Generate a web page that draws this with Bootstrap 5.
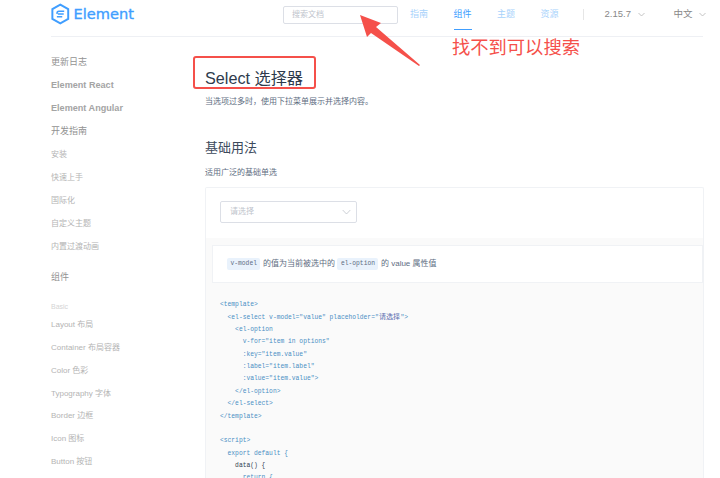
<!DOCTYPE html>
<html lang="zh">
<head>
<meta charset="utf-8">
<title>Select 选择器</title>
<link href="https://cdn.jsdelivr.net/npm/bootstrap@5.3.0/dist/css/bootstrap.min.css" rel="stylesheet">
<style>
html,body{height:478px;overflow:hidden;background:#fff}
body{position:relative;font-family:"Liberation Sans","Noto Sans CJK SC",sans-serif;color:#5e6d82;font-size:8px}
.page-wrap{padding-left:51px;padding-right:17px;width:720px;height:478px;overflow:hidden}
.top-bar{height:37px;border-bottom:1px solid #eef0f4;position:relative}
.logo-word{font-family:"DejaVu Sans","Noto Sans CJK SC",sans-serif;font-size:14.6px;font-weight:400;-webkit-text-stroke:.35px #409eff;color:#409eff;margin-left:4px;line-height:1}
.logo-box{width:83px;margin-top:3px;flex:none}
.search-box{flex:none;width:115px;height:18px;margin-left:149px;margin-top:6px;border:1px solid #dcdfe6;border-radius:2px;padding-left:8px;font-size:8px;line-height:16px;color:#c0c4cc}
.nav-links{flex:none;margin-left:12px;gap:25.5px;font-size:9px;color:#a8d2fb;padding-top:8px}
.nav-links span{width:18px;white-space:nowrap;position:relative}
.nav-links .on{color:#409eff}
.nav-links .on::after{content:"";position:absolute;left:0;right:0;top:21px;height:1px;background:#409eff}
.nav-sep{flex:none;width:1px;height:11px;background:#e6e6e6;margin:9px 0 0 24px}
.ver{flex:none;font-size:9.5px;color:#888;padding-top:7px;white-space:nowrap}
.ver-a{margin-left:21px}
.ver-b{margin-left:29px}
.side{width:154px;flex:none;padding-top:18px}
.side div{height:23px;line-height:15px;font-size:8px;color:#b4b4b4;white-space:nowrap}
.side .t1{font-size:9px;color:#929292}
.side .t2{font-size:9.1px;font-weight:700;color:#a4a4a4}
.side .t3{font-size:7px;color:#d4d4d4;height:16px;line-height:11px;margin-top:8px}
.side .t5{height:22.85px}
.side .gap{height:8px}
.doc{width:499px;flex:none}
.h-main{font-size:16.2px;font-weight:400;color:#2e3b4c;margin:31px 0 0;line-height:20px}
.lead-txt{font-size:8px;margin:8px 0 0;line-height:12px;color:#5e6d82}
.h-sub{font-size:13px;font-weight:400;color:#3c4a5c;margin:30px 0 0;line-height:20px}
.sub-txt{font-size:8px;margin:9px 0 0;line-height:12px;color:#5e6d82}
.demo-box{margin-top:8px;border:1px solid #f0f2f5;border-bottom:0;border-radius:2px 2px 0 0;height:292px;overflow:hidden}
.demo-top{height:50px;padding:13px 14px}
.sel-box{width:137px;height:22px;border:1px solid #dcdfe6;border-radius:2px;padding:0 5px 0 9px;color:#c0c4cc;font-size:8px}
.demo-code{background:#fafafa;padding:7px 0 0 6px;height:241px;overflow:hidden}
.tip-box{background:#fff;border:1px solid #f0f2f5;height:38px;padding:0 14px;font-size:8px;color:#5e6d82;white-space:nowrap}
.tip-code{font-family:"Liberation Mono",monospace;font-size:6.3px;line-height:8px;background:#e9f2fc;color:#5e6d82;padding:2px 3.5px;border-radius:2px;margin:0 2.5px 0 0}
.tip-sp{margin-right:2.5px}
.code-txt{margin:16px 0 0 8px;font-family:"Liberation Mono","Noto Sans CJK SC",monospace;font-size:6.3px;line-height:12.4px;color:#4a8fc4}
.code-ln{height:12.4px;white-space:pre}
.code-dark{color:#2f3e52}
.code-cjk{font-size:7px;color:#5a6fb0;margin:0 .4px}
.mark-rect{position:absolute;left:193px;top:56px;width:123px;height:33px;border:2px solid #f5504a;border-radius:3px}
.mark-text{position:absolute;left:452px;top:36px;font-size:18.3px;line-height:24px;color:#f5504a;white-space:nowrap}
.mark-arrow{position:absolute;left:355px;top:12px}
</style>
</head>
<body>
<div class="page-wrap">
  <div class="top-bar d-flex">
    <div class="logo-box d-flex align-items-start">
      <svg width="19" height="22" viewBox="0 0 19 22" fill="none"><path d="M9.5 1.4 17.6 6v10L9.5 20.6 1.4 16V6Z" stroke="#409eff" stroke-width="2"/><path d="M13.5 8.2 8 8.2C6.6 8.2 6 9.4 6.2 10.8M13 11 7 11M6 13.8H11.5" stroke="#409eff" stroke-width="1.6"/></svg>
      <span class="logo-word mt-1">Element</span>
    </div>
    <div class="search-box">搜索文档</div>
    <div class="nav-links d-flex">
      <span>指南</span><span class="on">组件</span><span>主题</span><span>资源</span>
    </div>
    <div class="nav-sep"></div>
    <div class="ver ver-a">2.15.7
      <svg class="ms-1" width="7" height="5" viewBox="0 0 7 5" fill="none"><path d="M.5 1 3.5 4 6.5 1" stroke="#b5b5b5" stroke-width=".8"/></svg>
    </div>
    <div class="ver ver-b">中文
      <svg class="ms-1" width="7" height="5" viewBox="0 0 7 5" fill="none"><path d="M.5 1 3.5 4 6.5 1" stroke="#b5b5b5" stroke-width=".8"/></svg>
    </div>
  </div>
  <div class="d-flex">
    <div class="side">
      <div class="t1">更新日志</div>
      <div class="t2">Element React</div>
      <div class="t2">Element Angular</div>
      <div class="t1">开发指南</div>
      <div>安装</div>
      <div>快速上手</div>
      <div>国际化</div>
      <div>自定义主题</div>
      <div>内置过渡动画</div>
      <div class="gap"></div>
      <div class="t1">组件</div>
      <div class="t3">Basic</div>
      <div class="t5">Layout 布局</div>
      <div class="t5">Container 布局容器</div>
      <div class="t5">Color 色彩</div>
      <div class="t5">Typography 字体</div>
      <div class="t5">Border 边框</div>
      <div class="t5">Icon 图标</div>
      <div class="t5">Button 按钮</div>
    </div>
    <div class="doc">
      <h1 class="h-main">Select 选择器</h1>
      <p class="lead-txt">当选项过多时，使用下拉菜单展示并选择内容。</p>
      <h2 class="h-sub">基础用法</h2>
      <p class="sub-txt">适用广泛的基础单选</p>
      <div class="demo-box">
        <div class="demo-top">
          <div class="sel-box d-flex align-items-center justify-content-between">
            <span>请选择</span>
            <svg width="9" height="6" viewBox="0 0 9 6" fill="none"><path d="M.7 1 4.5 5 8.3 1" stroke="#c0c4cc" stroke-width=".8"/></svg>
          </div>
        </div>
        <div class="demo-code">
          <div class="tip-box d-flex align-items-center">
            <code class="tip-code">v-model</code><span class="tip-sp">的值为当前被选中的</span><code class="tip-code">el-option</code><span>的 value 属性值</span>
          </div>
          <div class="code-txt">
            <div class="code-ln">&lt;template&gt;</div>
            <div class="code-ln">  &lt;el-select v-model="value" placeholder="<span class="code-cjk">请选择</span>"&gt;</div>
            <div class="code-ln">    &lt;el-option</div>
            <div class="code-ln">      v-for="item in options"</div>
            <div class="code-ln">      :key="item.value"</div>
            <div class="code-ln">      :label="item.label"</div>
            <div class="code-ln">      :value="item.value"&gt;</div>
            <div class="code-ln">    &lt;/el-option&gt;</div>
            <div class="code-ln">  &lt;/el-select&gt;</div>
            <div class="code-ln">&lt;/template&gt;</div>
            <div class="code-ln"> </div>
            <div class="code-ln">&lt;script&gt;</div>
            <div class="code-ln">  export default {</div>
            <div class="code-ln code-dark">    data() {</div>
            <div class="code-ln">      return {</div>
          </div>
        </div>
      </div>
    </div>
  </div>
</div>
<div class="mark-rect"></div>
<div class="mark-text">找不到可以搜索</div>
<svg class="mark-arrow" width="70" height="56" viewBox="0 0 70 56"><path d="M5 3 26 11 21 15 65 53 64 54 16 21 12 25Z" fill="#f5504a"/></svg>
</body>
</html>
